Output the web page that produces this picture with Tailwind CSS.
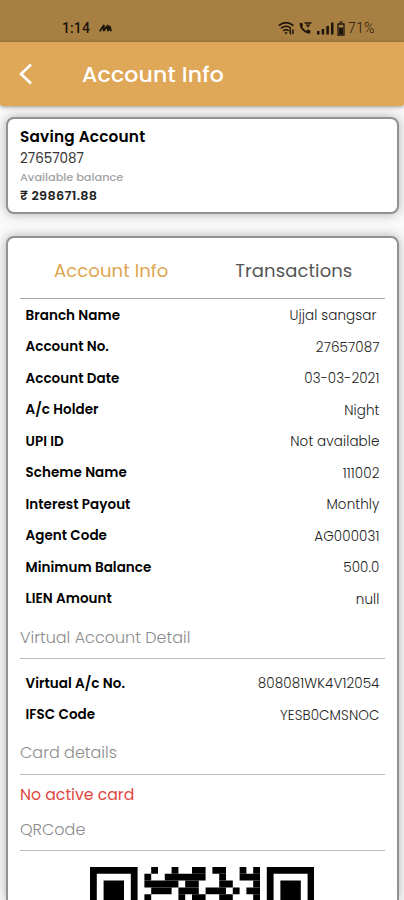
<!DOCTYPE html>
<html lang="en">
<head>
    <meta charset="UTF-8">
    <meta name="viewport" content="width=device-width, initial-scale=1.0">
    <title>Account Info</title>
    <script src="https://cdn.jsdelivr.net/npm/@tailwindcss/browser@4"></script>
</head>
<body class="h-[900px] overflow-hidden bg-[#fafafa] font-['Poppins','Inter',sans-serif] text-black">
    <!-- Status bar -->
    <div class="flex h-[42px] items-end justify-between bg-[#a87f42] pr-[28px] pb-[5px] pl-[62px] text-[#1d150b]">
        <div class="flex items-center gap-[9px]">
            <span class="font-['Roboto',sans-serif] text-[14px] leading-[18px] font-medium tracking-[0.1px]">1:14</span>
            <svg class="h-[8px] w-[13px]" viewBox="0 0 13 8" fill="none" stroke="currentColor" stroke-width="1.9" stroke-linejoin="round"><path d="M.8 7.300L4.800 1.500L4.900 6.500L8.700 1.500L9 6.500L10.800 2.500l1.200 4.800"/></svg>
        </div>
        <div class="flex items-center">
            <svg class="h-[15px] w-[17px]" viewBox="0 0 17 15" fill="none" stroke="currentColor" stroke-width="1.6"><path d="M.8 4.6Q8 -1.4 15.400 4.600M3 7.300Q8 3.200 13 7.300M5.300 9.900Q8 7.600 10.700 9.900"/><path d="M6.400 11.200h3.200L8 13.400z" fill="currentColor" stroke="none"/><path d="M12.300 8v4.500M12.300 13h1M15 8.500V13" stroke-width="1.500"/></svg>
            <svg class="ml-[4px] h-[14px] w-[13px]" viewBox="0 0 13 14" fill="none" stroke="currentColor"><path d="M1.500 3C2 7.500 5.500 11.300 10.500 11.800" stroke-width="2"/><path d="M.5 2h2.800l.7 3-2 1.200zM7.200 10.200l1.200-1.600 2.900.7v3.100z" fill="currentColor" stroke="none"/><path d="M5.500 2h7M7 4.200h4M9 4.200v2.500" stroke-width="1.300"/></svg>
            <svg class="ml-[5px] h-[14px] w-[17px]" viewBox="0 0 17 14" fill="currentColor"><path d="M0 10h2.500v3.500H0zM4.700 8h2.500v5.500H4.700zM9.400 5h2.500v8.500H9.400zM14 1.500h2.500v12H14z"/></svg>
            <svg class="ml-[3px] h-[15px] w-[8px]" viewBox="0 0 8 15" fill="none" stroke="currentColor"><path d="M2.500 1.200h3M1 3h6v11H1z" stroke-width="1.300"/><path d="M2 6.500h4V13H2z" fill="currentColor" stroke="none"/></svg>
            <span class="ml-[3px] w-[28px] font-['Roboto',sans-serif] text-[14px] leading-[18px] font-light tracking-[0.2px]">71%</span>
        </div>
    </div>

    <!-- App bar -->
    <header class="relative flex h-[64px] items-center rounded-b-[3px] bg-[#dfa758] pl-[18px] text-white shadow-[0_1px_4px_rgba(0,0,0,0.4)]">
        <svg class="h-[22px] w-[14px]" viewBox="0 0 14 22" fill="none" stroke="currentColor" stroke-width="2.6"><path d="M13 1.500L3 11l10 9.500"/></svg>
        <h1 class="ml-[50px] text-[22px] font-medium tracking-[0.2px]">Account Info</h1>
    </header>

    <main class="px-[6px] pt-[11px]">
        <!-- Balance card -->
        <section class="h-[97px] w-[393px] rounded-[8px] border-2 border-[#929292] bg-white pt-[6px] pl-[12px] shadow-[0_0_12px_rgba(0,0,0,0.3)]">
            <h2 class="h-[24px] text-[15.300px] leading-[23px] font-semibold tracking-[0.2px]">Saving Account</h2>
            <p class="h-[19px] text-[13.500px] leading-[20px] text-[#333]">27657087</p>
            <p class="h-[18px] text-[11.300px] leading-[18px] font-medium text-[#a3a3a3]">Available balance</p>
            <p class="h-[19px] text-[12.800px] leading-[20px] font-semibold tracking-[0.300px] text-[#222]">₹ 298671.88</p>
        </section>

        <!-- Details card, cut off by the bottom of the screen -->
        <section class="mt-[22px] h-[664px] w-[393px] overflow-hidden rounded-t-[8px] border-2 border-b-0 border-[#929292] bg-white px-[12px] shadow-[0_0_12px_rgba(0,0,0,0.3)]">
            <nav class="grid h-[61px] grid-cols-2 items-center border-b border-[#aaa] pt-[4px] text-center text-[18px] tracking-[0.1px]">
                <a class="text-[#dda54f]">Account Info</a>
                <a class="text-[#555]">Transactions</a>
            </nav>
            <dl class="grid auto-rows-[31.500px] grid-cols-[auto_auto] items-center px-[5.500px] text-[13.500px] [&>dd]:pt-[3px] [&>dd]:text-right [&>dd]:font-light [&>dd]:text-[13.500px] [&>dd]:tracking-[0.100px] [&>dd]:text-[#222] [&>dt]:pt-[2px] [&>dt]:font-semibold [&>dt]:tracking-[0.050px]">
                <dt>Branch Name</dt><dd class="pr-[3px]">Ujjal sangsar</dd>
                <dt>Account No.</dt><dd>27657087</dd>
                <dt>Account Date</dt><dd>03-03-2021</dd>
                <dt>A/c Holder</dt><dd>Night</dd>
                <dt>UPI ID</dt><dd>Not available</dd>
                <dt>Scheme Name</dt><dd>111002</dd>
                <dt>Interest Payout</dt><dd>Monthly</dd>
                <dt>Agent Code</dt><dd>AG000031</dd>
                <dt>Minimum Balance</dt><dd>500.0</dd>
                <dt>LIEN Amount</dt><dd>null</dd>
            </dl>
            <h3 class="flex h-[45px] items-center border-b border-[#bbb] pt-[3px] text-[16px] font-light text-[#8c8c8c]">Virtual Account Detail</h3>
            <dl class="mt-[8px] grid auto-rows-[31.500px] grid-cols-[auto_auto] items-center px-[5.500px] text-[13.500px] [&>dd]:pt-[3px] [&>dd]:text-right [&>dd]:font-light [&>dd]:text-[13.500px] [&>dd]:tracking-[0.100px] [&>dd]:text-[#222] [&>dt]:pt-[2px] [&>dt]:font-semibold [&>dt]:tracking-[0.050px]">
                <dt>Virtual A/c No.</dt><dd>808081WK4V12054</dd>
                <dt>IFSC Code</dt><dd>YESB0CMSNOC</dd>
            </dl>
            <h3 class="flex h-[45px] items-center border-b border-[#bbb] pt-[2px] text-[16px] font-light text-[#8c8c8c]">Card details</h3>
            <p class="mt-[2px] flex h-[36px] items-center text-[15.700px] text-[#e0483f]">No active card</p>
            <h3 class="flex h-[38px] items-start border-b border-[#bbb] pt-[5px] text-[16px] font-light text-[#8c8c8c]">QRCode</h3>
            <!-- QR code, 33 modules wide, top rows only -->
            <svg class="mt-[16px] ml-[70px] h-[34px] w-[224.400px]" viewBox="0 0 33 5" fill="#000">
                <path d="M0 0h7v5H0zM26 0h7v5h-7z"/>
                <path d="M1 1h5v4H1zM27 1h5v4h-5z" fill="#fff"/>
                <path d="M2 2h3v3H2zM28 2h3v3h-3z"/>
                <path d="M9 0h1v1H9zM12 0h1v1h-1zM15 0h2v1h-2zM18 0h2v1h-2zM22 0h1v1h-1zM24 0h1v1h-1z"/>
                <path d="M8 1h1v1H8zM11 1h6v1h-6zM19 1h1v1h-1zM22 1h3v1h-3z"/>
                <path d="M8 2h5v1H8zM14 2h2v1h-2zM19 2h2v1h-2zM24 2h1v1h-1z"/>
                <path d="M9 3h3v1H9zM13 3h3v1h-3zM17 3h3v1h-3zM21 3h1v1h-1zM23 3h2v1h-2z"/>
                <path d="M8 4h1v1H8zM13 4h1v1h-1zM15 4h2v1h-2zM19 4h2v1h-2zM24 4h1v1h-1z"/>
            </svg>
        </section>
    </main>
</body>
</html>
